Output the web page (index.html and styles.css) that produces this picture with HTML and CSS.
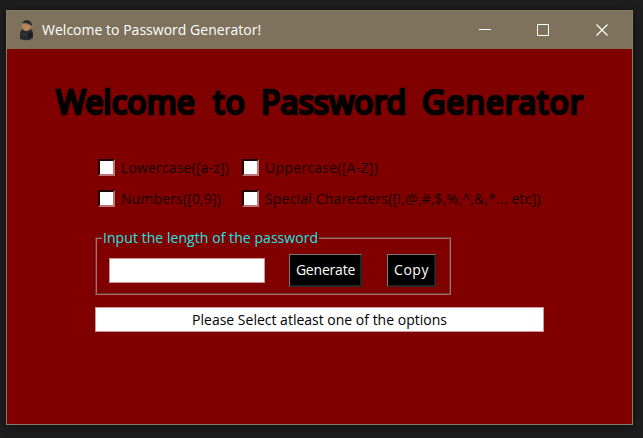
FILE: index.html
```html
<!DOCTYPE html>
<html lang="en">
<head>
<meta charset="utf-8">
<title>Welcome to Password Generator!</title>
<link rel="stylesheet" href="styles.css">
</head>
<body>
<main class="window">
  <header class="titlebar">
    <svg class="app-icon" width="16" height="21" viewBox="0 0 16 21">
      <path d="M1 19V14Q1 9 6 9H10Q14 9 14 14V18Q10 21 6 20Q3 20 1 19Z" fill="#292b2c"/>
      <path d="M3 4Q3 11 7 11Q12 11 12 5Z" fill="#b9855a"/>
      <path d="M3 3Q5 0 8 0Q13 1 13 6L8 3Z" fill="#282b2c"/>
      <circle cx="11" cy="15" r="2.5" fill="#191b1c"/>
      <path d="M3 14Q6 12 8 16" fill="none" stroke="#3e4142"/>
    </svg>
    <span class="title">Welcome to Password Generator!</span>
    <svg class="controls" width="131" height="14" viewBox="0 0 131 14" fill="none" stroke="#fff">
      <path d="M0 6.5H12"/>
      <path d="M58.5 1.5H69.5V12.5H58.5Z"/>
      <path d="M117.5 1.5L128.5 12.5M128.5 1.5L117.5 12.5" stroke-width="1.2"/>
    </svg>
  </header>
  <h1 class="heading"><span class="w1">Welcome</span> <span class="w2">to</span> <span class="w3">Password</span> <span class="w4">Generator</span></h1>
  <section class="options">
    <label class="option"><i class="box"></i><span class="lower">Lowercase([a-z])</span></label>
    <label class="option"><i class="box"></i><span class="upper">Uppercase([A-Z])</span></label>
    <label class="option"><i class="box"></i><span class="numbers">Numbers([0,9])</span></label>
    <label class="option"><i class="box"></i><span class="special">Special Charecters([!,@,#,$,%,^,&amp;,*... etc])</span></label>
  </section>
  <section class="group">
    <div class="legend"><span>Input the length of the password</span></div>
    <div class="controls-row">
      <div class="entry"></div>
      <div class="button generate"><span>Generate</span></div>
      <div class="button copy"><span>Copy</span></div>
    </div>
  </section>
  <div class="result"><span>Please Select atleast one of the options</span></div>
</main>
</body>
</html>
```
FILE: styles.css
```css
* { box-sizing: border-box; }
body {
  margin: 0;
  height: 438px;
  padding: 10px 10px 13px 6px;
  background: #1e1e1e;
  font: 14px/20px "Open Sans", "Noto Sans", sans-serif;
  overflow: hidden;
}
.window {
  width: 627px;
  height: 415px;
  border: 1px solid #857a62;
  background: #800000;
  box-shadow: 0 2px 9px #101010;
}
span { white-space: nowrap; }
.titlebar {
  height: 38px;
  display: flex;
  align-items: center;
  padding-left: 12px;
  background: #7e725d;
  color: #fff;
}
.app-icon { margin-right: 7px; }
.title { width: 437px; letter-spacing: 0.02px; }
.heading {
  display: flex;
  margin: 28px 0 0 49px;
  height: 50px;
  font: 400 32px/50px "Comic Sans MS", "Noto Sans", sans-serif;
  color: #000;
  -webkit-text-stroke: 2.6px #000;
}
.w1 { width: 157px; letter-spacing: 0.1px; }
.w2 { width: 48px; letter-spacing: 1px; }
.w3 { width: 161px; letter-spacing: 0.05px; }
.w4 { width: 165px; letter-spacing: 0.9px; }
.options {
  display: grid;
  grid-template-columns: 144px 320px;
  grid-auto-rows: 31px;
  margin: 25px 0 0 91px;
  color: #180000;
}
.option { display: flex; align-items: center; gap: 6px; }
.lower { letter-spacing: 0.16px; }
.upper { letter-spacing: 0.27px; }
.numbers { letter-spacing: 0.14px; }
.special { letter-spacing: 0.18px; }
.box {
  width: 17px;
  height: 17px;
  background: #fff;
  border: 2px solid;
  border-color: #210000 #bd7474 #bd7474 #210000;
}
.group {
  width: 356px;
  height: 58px;
  margin: 23px 0 0 88px;
  border: 2px groove #b66a6a;
}
.legend { height: 18px; margin: -10px 0 0 5px; color: #20e4e0; line-height: 18px; letter-spacing: 0.06px; }
.legend span { background: #800000; padding: 0 1px; }
.controls-row { display: flex; align-items: center; height: 32px; margin: 7px 0 0 12px; }
.entry { width: 156px; height: 25px; background: #fff; border: 1px solid #c99; }
.button {
  height: 33px;
  background: #000;
  border: 1px solid;
  border-color: #777 #292929 #292929 #777;
  box-shadow: inset -1px -1px #222;
  color: #fff;
  display: flex;
  align-items: center;
  justify-content: center;
}
.generate { width: 73px; margin-left: 24px; letter-spacing: -0.2px; }
.copy { width: 49px; margin-left: 25px; letter-spacing: 0.5px; }
.result {
  width: 449px;
  height: 25px;
  margin: 12px 0 0 88px;
  border: 1px solid #c99;
  background: #fff;
  color: #000;
  text-align: center;
  line-height: 23px;
}
```
